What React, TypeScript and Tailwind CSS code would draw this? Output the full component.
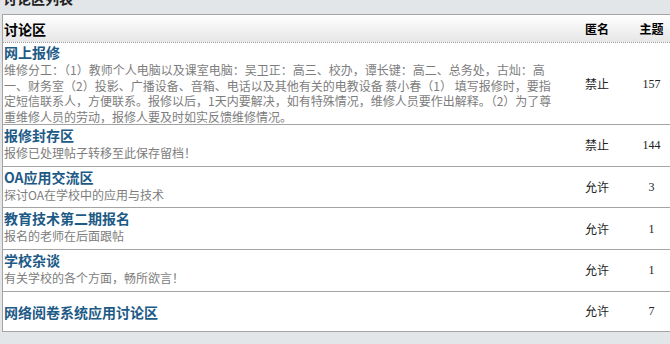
import React from "react";

type Row = {
  title: string;
  desc?: string;
  anon: string;
  topics: string;
  h: string;
};

const rows: Row[] = [
  {
    title: "网上报修",
    desc: "维修分工：（1）教师个人电脑以及课室电脑：吴卫正：高三、校办，谭长键：高二、总务处，古灿：高一、财务室（2）投影、广播设备、音箱、电话以及其他有关的电教设备 蔡小春（1） 填写报修时，要指定短信联系人，方便联系。报修以后，1天内要解决，如有特殊情况，维修人员要作出解释。（2）为了尊重维修人员的劳动，报修人要及时如实反馈维修情况。",
    anon: "禁止",
    topics: "157",
    h: "min-h-[82px]",
  },
  { title: "报修封存区", desc: "报修已处理帖子转移至此保存留档！", anon: "禁止", topics: "144", h: "min-h-[40px]" },
  { title: "OA应用交流区", desc: "探讨OA在学校中的应用与技术", anon: "允许", topics: "3", h: "min-h-[41px]" },
  { title: "教育技术第二期报名", desc: "报名的老师在后面跟帖", anon: "允许", topics: "1", h: "min-h-[42px]" },
  { title: "学校杂谈", desc: "有关学校的各个方面，畅所欲言！", anon: "允许", topics: "1", h: "min-h-[41px]" },
  { title: "网络阅卷系统应用讨论区", anon: "允许", topics: "7", h: "min-h-[39px]" },
];

const font = { fontFamily: '"Noto Sans CJK SC", "Noto Sans", sans-serif' };

export default function App() {
  return (
    <div className="w-[670px] h-[344px] overflow-hidden bg-[#e3e6e8]" style={font}>
      <div className="h-[14px] overflow-hidden pl-[3px]">
        <div className="-mt-[10px] text-[14px] leading-[16px] font-bold text-[#222]">讨论区列表</div>
      </div>
      <div className="ml-[2px] w-[680px] border-l border-t border-b border-[#a4a4a4] bg-white">
        <div className="flex h-[28px] items-center border-b border-dotted border-[#9a9a9a] bg-gradient-to-b from-white to-[#e6e6e6]">
          <div className="w-[569px] pl-[1px] text-[14px] leading-[18px] font-bold text-black">讨论区</div>
          <div className="w-[50px] text-center text-[12px] leading-[16px] font-bold text-black">匿名</div>
          <div className="w-[49px] pl-[10px] text-center text-[12px] leading-[16px] font-bold text-black">主题</div>
        </div>
        {rows.map((r, i) => {
          const last = i === rows.length - 1;
          return (
            <div
              key={i}
              className={"flex items-center " + r.h + (last ? "" : " border-b border-[#a4a4a4]")}
            >
              <div className={"w-[569px] pl-[1px] " + (r.desc ? (i === 0 ? "" : "pb-[5px]") : "pt-[1px]")}>
                <div className={"text-[14px] font-bold text-[#1d5a86] " + (i === 0 ? "leading-[19px]" : "leading-[20px]")}>
                  {r.title}
                </div>
                {r.desc && (
                  <div className="w-[552px] text-[12px] leading-[15.5px] text-[#7d7d7d]">{r.desc}</div>
                )}
              </div>
              <div className="w-[50px] text-center text-[12px] leading-[16px] text-[#222]">{r.anon}</div>
              <div
                className="w-[49px] pl-[10px] text-center text-[12px] leading-[16px] text-[#222]"
                style={{ fontFamily: '"Liberation Serif", serif' }}
              >
                {r.topics}
              </div>
            </div>
          );
        })}
      </div>
    </div>
  );
}
